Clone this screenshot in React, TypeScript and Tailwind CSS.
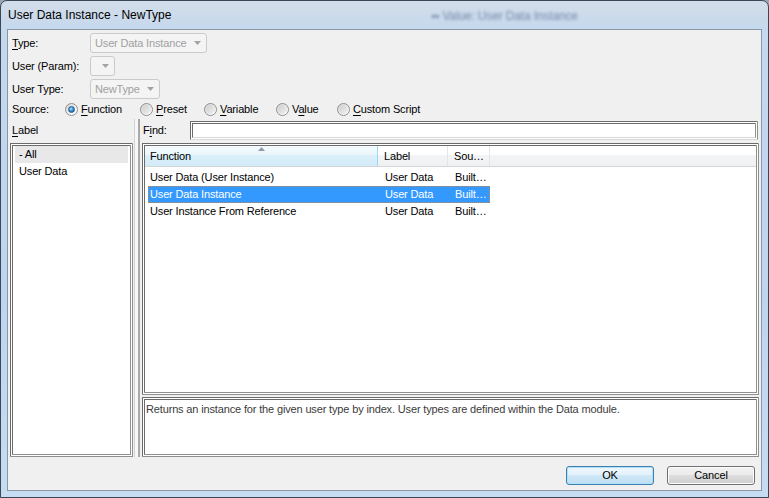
import React from "react";

function Arrow({ color = "#a3a3a3" }: { color?: string }) {
  return (
    <svg width="7" height="4" viewBox="0 0 7 4" className="shrink-0">
      <path d="M0 0 L7 0 L3.5 4 Z" fill={color} />
    </svg>
  );
}

function Radio({ checked }: { checked?: boolean }) {
  return (
    <div className="w-[13px] h-[13px] rounded-full border border-[#8f8f8f] bg-[linear-gradient(135deg,#d4d4d4,#f4f4f4_60%,#ffffff)] flex items-center justify-center shrink-0">
      {checked ? (
        <div className="w-[7px] h-[7px] rounded-full bg-[radial-gradient(circle_at_40%_35%,#b6e3fb,#3f95d4_45%,#0d4f8e_100%)] border border-[#1c5a92]" />
      ) : (
        <div className="w-[9px] h-[9px] rounded-full bg-[linear-gradient(135deg,#cfcfcf,#f0f0f0)]" />
      )}
    </div>
  );
}

function U({ children }: { children: React.ReactNode }) {
  return <span className="underline decoration-1 underline-offset-[2px]">{children}</span>;
}

const rows = [
  { f: "User Data (User Instance)", l: "User Data", s: "Built…", sel: false },
  { f: "User Data Instance", l: "User Data", s: "Built…", sel: true },
  { f: "User Instance From Reference", l: "User Data", s: "Built…", sel: false },
];

export default function App() {
  return (
    <div className="w-[769px] h-[498px] font-['Liberation_Sans',Arial,sans-serif] text-[11px] tracking-[-0.15px] text-black bg-[#9aa6b3]">
      <div className="relative w-full h-full rounded-t-[7px] border border-[#3a4756] bg-[linear-gradient(180deg,#d3dde8_0px,#c4d8ee_30px,#bed5ef_60%,#c6dcf2_100%)] flex flex-col px-[6px] pb-[6px] overflow-hidden">
        <div className="absolute left-[430px] top-[6px] text-[12px] text-[#4d6a8f] blur-[1.4px] opacity-70 whitespace-nowrap">
          ▪▪ Value: User Data Instance
        </div>
        <div className="h-[28px] flex items-center pl-[1px] pb-[1px] text-[12px] tracking-normal text-black relative">
          User Data Instance - NewType
        </div>
        <div className="flex-1 border border-[#8a97a6] bg-[#f0f0f0] flex flex-col min-h-0">
          {/* top form */}
          <div className="flex flex-col pl-[4px] pt-[3px] gap-[3px]">
            <div className="flex items-center h-[20px]">
              <div className="w-[78px]">
                <U>T</U>ype:
              </div>
              <div className="w-[117px] h-[20px] rounded-[3px] border border-[#cacaca] bg-[#f4f4f4] flex items-center justify-between pl-[4px] pr-[5px] text-[#a0a0a0]">
                <span>User Data Instance</span>
                <Arrow />
              </div>
            </div>
            <div className="flex items-center h-[20px]">
              <div className="w-[78px]">User (Param):</div>
              <div className="w-[25px] h-[20px] rounded-[3px] border border-[#cacaca] bg-[#f4f4f4] flex items-center justify-end pr-[5px]">
                <Arrow />
              </div>
            </div>
            <div className="flex items-center h-[20px]">
              <div className="w-[78px]">User Type:</div>
              <div className="w-[70px] h-[20px] rounded-[3px] border border-[#cacaca] bg-[#f4f4f4] flex items-center justify-between pl-[4px] pr-[5px] text-[#a0a0a0]">
                <span>NewType</span>
                <Arrow />
              </div>
            </div>
          </div>
          <div className="flex items-center h-[20px] pl-[4px]">
            <div className="w-[53px]">Source:</div>
            <div className="w-[75px] flex items-center gap-[3px]">
              <Radio checked />
              <span>
                <U>F</U>unction
              </span>
            </div>
            <div className="w-[64px] flex items-center gap-[3px]">
              <Radio />
              <span>
                <U>P</U>reset
              </span>
            </div>
            <div className="w-[72px] flex items-center gap-[3px]">
              <Radio />
              <span>
                <U>V</U>ariable
              </span>
            </div>
            <div className="w-[61px] flex items-center gap-[3px]">
              <Radio />
              <span>
                V<U>a</U>lue
              </span>
            </div>
            <div className="flex items-center gap-[3px]">
              <Radio />
              <span>
                <U>C</U>ustom Script
              </span>
            </div>
          </div>

          {/* main area */}
          <div className="flex-1 flex min-h-0">
            {/* left pane */}
            <div className="ml-[2px] w-[123px] flex flex-col">
              <div className="h-[24px] flex items-center pl-[2px] pb-[1px]">
                <U>L</U>abel
              </div>
              <div className="flex-1 border-[3px] border-double border-t-[#6b6b6b] border-l-[#6b6b6b] border-r-[#8f8f8f] border-b-[#8f8f8f] bg-white pt-[0px]">
                <div className="mx-[2px] h-[17px] bg-[#e8e8e8] flex items-center pl-[4px]">- All</div>
                <div className="mx-[2px] h-[17px] flex items-center pl-[4px]">User Data</div>
              </div>
            </div>
            {/* splitter */}
            <div className="w-[6px] ml-[1px] border-l border-l-[#d3d3d3] border-r-2 border-r-[#a9a9a9] bg-[#f7f7f7]" />
            {/* right pane */}
            <div className="flex-1 ml-[2px] mr-[2px] flex flex-col min-w-0">
              <div className="mt-[1px] h-[20px] flex items-center">
                <div className="w-[48px] pl-[1px]">
                  F<U>i</U>nd:
                </div>
                <div className="flex-1 mr-[1px] h-[19px] border-[3px] border-double border-t-[#6b6b6b] border-l-[#6b6b6b] border-r-[#8f8f8f] border-b-[#d8d8d8] bg-white" />
              </div>
              <div className="mt-[3px] flex-1 border-[3px] border-double border-t-[#6b6b6b] border-l-[#6b6b6b] border-r-[#8f8f8f] border-b-[#8f8f8f] bg-white flex flex-col min-h-0">
                {/* header */}
                <div className="h-[21px] flex border-b border-[#d5d5d5] shrink-0">
                  <div className="relative w-[233px] border-r border-[#96d9f9] bg-[linear-gradient(180deg,#f4fafd_0%,#eaf6fc_45%,#dbf0fa_45%,#d3ebf8_100%)] flex items-center pl-[5px]">
                    Function
                    <div className="absolute left-[113px] top-[1px]">
                      <svg width="7" height="4" viewBox="0 0 7 4">
                        <path d="M0 4 L3.5 0 L7 4 Z" fill="#8c9bab" />
                      </svg>
                    </div>
                  </div>
                  <div className="w-[70px] border-r border-[#e3e5e8] bg-[linear-gradient(180deg,#ffffff_0%,#ffffff_45%,#f3f4f6_45%,#f0f1f3_100%)] flex items-center pl-[6px]">
                    Label
                  </div>
                  <div className="w-[42px] border-r border-[#e3e5e8] bg-[linear-gradient(180deg,#ffffff_0%,#ffffff_45%,#f3f4f6_45%,#f0f1f3_100%)] flex items-center pl-[6px]">
                    Sou…
                  </div>
                  <div className="flex-1 bg-[linear-gradient(180deg,#ffffff_0%,#ffffff_45%,#f3f4f6_45%,#f0f1f3_100%)]" />
                </div>
                {/* rows */}
                <div className="pt-[2px] flex flex-col">
                  {rows.map((r) => (
                    <div
                      key={r.f}
                      className={
                        r.sel
                          ? "ml-[3px] w-[342px] h-[17px] flex items-center bg-[#3399ff] text-white border border-dotted border-[#c9874a]"
                          : "ml-[3px] w-[342px] h-[17px] flex items-center border border-transparent"
                      }
                    >
                      <div className="w-[229px] pl-[1px] whitespace-nowrap">{r.f}</div>
                      <div className="w-[70px] pl-[7px] whitespace-nowrap">{r.l}</div>
                      <div className="flex-1 pl-[7px] whitespace-nowrap">{r.s}</div>
                    </div>
                  ))}
                </div>
              </div>
              <div className="mt-[2px] h-[60px] border-[3px] border-double border-t-[#6b6b6b] border-l-[#6b6b6b] border-r-[#8f8f8f] border-b-[#8f8f8f] bg-white pl-[1px] pt-[1px] text-[#3b3b3b] whitespace-nowrap">
                Returns an instance for the given user type by index. User types are defined within the Data module.
              </div>
            </div>
          </div>

          {/* buttons */}
          <div className="mt-[9px] mb-[5px] h-[19px] flex justify-end gap-[13px] mr-[6px]">
            <div className="w-[88px] h-[19px] rounded-[3px] border border-[#3c7fb1] bg-[linear-gradient(180deg,#eef7fc_0%,#e3f1fa_48%,#cfe7f6_50%,#bddff3_100%)] shadow-[inset_0_0_0_1px_#b3e0f9] flex items-center justify-center">
              OK
            </div>
            <div className="w-[88px] h-[19px] rounded-[3px] border border-[#707070] bg-[linear-gradient(180deg,#f2f2f2_0%,#ebebeb_48%,#dddddd_50%,#cfcfcf_100%)] shadow-[inset_0_0_0_1px_#fcfcfc] flex items-center justify-center">
              Cancel
            </div>
          </div>
        </div>
      </div>
    </div>
  );
}
